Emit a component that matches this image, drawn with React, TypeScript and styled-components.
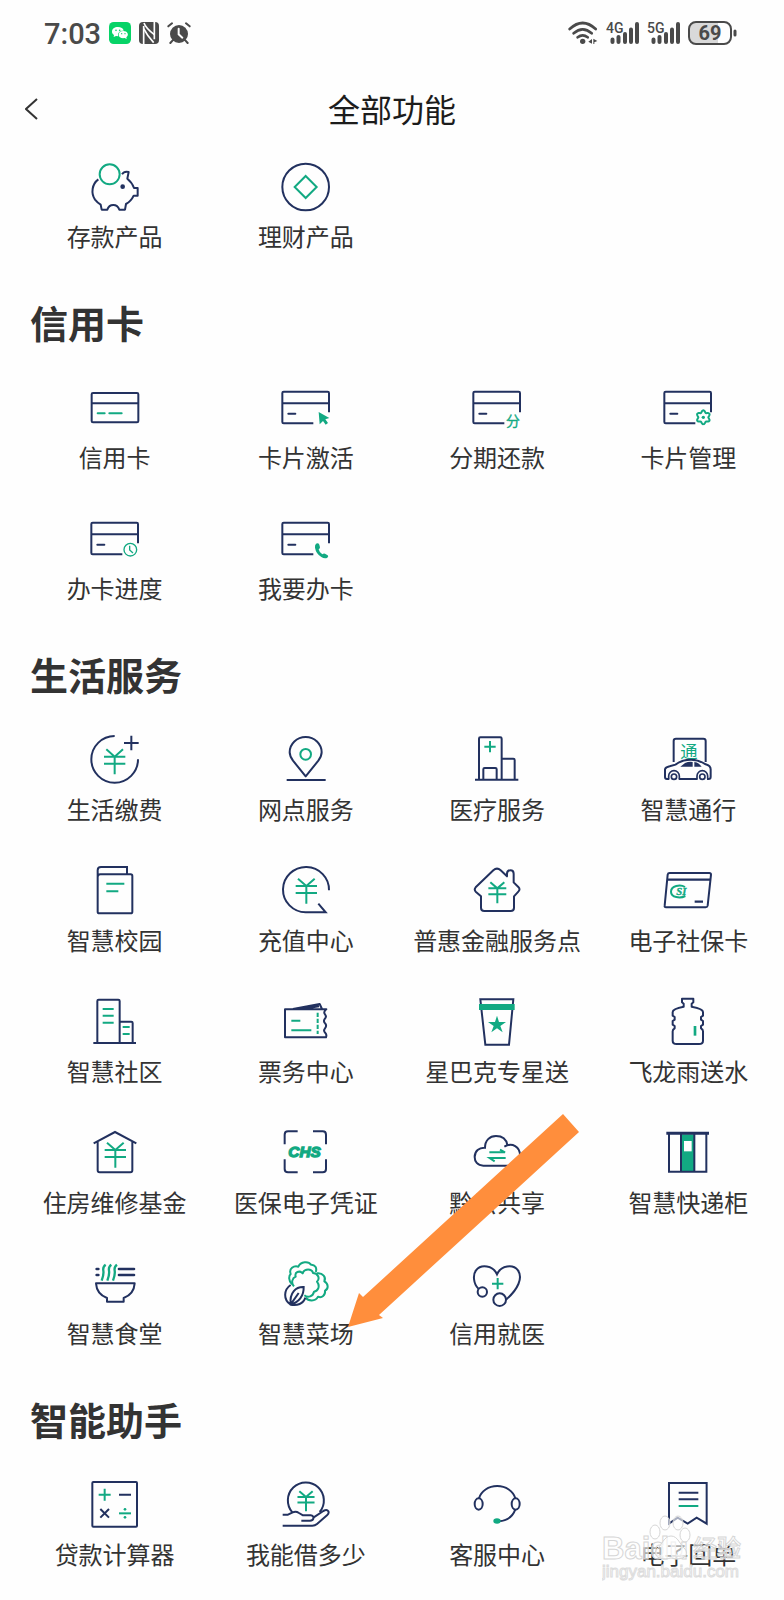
import React from 'react';
import styled, { createGlobalStyle } from 'styled-components';

const NAVY = '#22315f';
const GREEN = '#12a982';
const STATUS = '#4a4a4a';
const CJK = '"Noto Sans CJK SC", sans-serif';

const GlobalStyle = createGlobalStyle`
  *, *::before, *::after { box-sizing: border-box; }
  body {
    margin: 0;
    background: #fefefe;
    color: #333;
    font-family: ${CJK};
  }
`;

const Page = styled.div`
  position: relative;
  padding-bottom: 28px;
  overflow: hidden;
`;

const StatusBar = styled.div`
  display: flex;
  justify-content: space-between;
  align-items: center;
  height: 66px;
  padding: 0 47px 0 44px;
`;

const StatusGroup = styled.div`
  display: flex;
  align-items: center;
  gap: 8px;
`;

const Clock = styled.time`
  padding-top: 2px;
  font: 500 29px/32px Roboto, sans-serif;
  color: ${STATUS};
`;

const Header = styled.header`
  display: grid;
  grid-template-columns: 64px minmax(0, 1fr) 64px;
  align-items: center;
  height: 84px;
  margin-bottom: 9px;
`;

const BackButton = styled.button`
  display: flex;
  justify-content: center;
  padding: 14px 0 12px;
  border: 0;
  background: none;
`;

const Title = styled.h1`
  margin: 0;
  font-size: 32px;
  line-height: 44px;
  font-weight: 400;
  text-align: center;
  color: #1c1c1c;
`;

const SectionTitle = styled.h2`
  margin: 45px 0 34px 30px;
  font-size: 38px;
  line-height: 48px;
  font-weight: 700;
`;

const Grid = styled.ul`
  display: grid;
  grid-template-columns: repeat(4, minmax(0, 1fr));
  row-gap: 37px;
  margin: 0;
  padding: 0 0 0 19px;
  list-style: none;
`;

const Cell = styled.li`
  position: relative;
  display: flex;
  justify-content: center;
`;

const FeatureButton = styled.button`
  display: flex;
  flex-direction: column;
  align-items: center;
  gap: 4px;
  padding: 0;
  border: 0;
  background: none;
  color: #333;
  font: 400 24px/34px ${CJK};
  white-space: nowrap;
  cursor: pointer;
`;

const IconSvg = styled.svg`
  display: block;
  width: 56px;
  height: 56px;
  fill: none;
  stroke: ${NAVY};
  stroke-width: 6;
  overflow: visible;
`;

const Arrow = styled.svg`
  position: absolute;
  left: calc(50% + 42px);
  bottom: 23px;
  z-index: 1;
  pointer-events: none;
`;

const Watermark = styled.svg`
  position: absolute;
  right: 40px;
  bottom: 16px;
  z-index: 2;
  pointer-events: none;
`;

type IconProps = { x: number; y: number; children: React.ReactNode };
const Icon = ({ x, y, children }: IconProps) => (
  <IconSvg viewBox={`${x} ${y} 168 168`} aria-hidden="true">{children}</IconSvg>
);

const Yen = ({ x, y, s = 1 }: { x: number; y: number; s?: number }) => (
  <path
    stroke={GREEN}
    strokeWidth={6 / s}
    transform={`translate(${x} ${y}) scale(${s})`}
    d="M-25-22L0 0L25-22M-32 0H32M-32 21H32M0 0V53"
  />
);

const Plus = ({ x, y, r, color = GREEN }: { x: number; y: number; r: number; color?: string }) => (
  <path stroke={color} d={`M${x - r} ${y}H${x + r}M${x} ${y - r}V${y + r}`} />
);

const CardBase = ({ children }: { children: React.ReactNode }) => (
  <Icon x={0} y={0}>
    <path d="M153 97V39q0-4-4-4H17q-4 0-4 4v87q0 4 4 4H106M13 70H153" />
    <path d="M31 101H52" strokeLinecap="round" />
    {children}
  </Icon>
);

const gearPath = Array.from({ length: 61 }, (_, i) => {
  const a = (i / 60) * Math.PI * 2;
  const r = 18 + 3 * Math.cos(6 * a);
  return `${i ? 'L' : 'M'}${(130 + r * Math.sin(a)).toFixed(1)} ${(112 + r * Math.cos(a)).toFixed(1)}`;
}).join('');

const icons = {
  piggy: (
    <Icon x={262} y={60}>
      <circle cx="330" cy="106" r="30" stroke={GREEN} />
      <path strokeLinejoin="round" d="M296 121C277 135 273 162 286 182Q294 192 303 197L306 212H323C329 194 352 193 359 212H376L379 195C390 189 397 181 402 170H414V147H403C399 135 393 127 383 119L387 99Q374 95 367 106" />
      <circle cx="369" cy="143" r="4" fill={NAVY} />
    </Icon>
  ),
  finance: (
    <Icon x={835} y={60}>
      <circle cx="918" cy="144" r="70" />
      <path stroke={GREEN} d="M918 111L951 144L918 177L885 144Z" />
    </Icon>
  ),
  card: (
    <Icon x={262} y={33}>
      <rect x="276" y="72" width="140" height="88" rx="4" />
      <path d="M276 103H416" />
      <path stroke={GREEN} strokeLinecap="round" d="M294 133H315M329 133H366" />
    </Icon>
  ),
  activate: (
    <CardBase>
      <path fill={GREEN} stroke="none" d="M122 96L154 114L142 118L150 129L143 134L135 123L125 133Z" />
    </CardBase>
  ),
  installment: (
    <CardBase>
      <text x="111" y="138" fill={GREEN} stroke={GREEN} strokeWidth="1" fontSize="42" fontFamily="Noto Sans CJK SC">分</text>
    </CardBase>
  ),
  manage: (
    <CardBase>
      <path stroke={GREEN} d={gearPath} />
      <circle cx="130" cy="112" r="5" fill={GREEN} stroke="none" />
    </CardBase>
  ),
  progress: (
    <CardBase>
      <circle cx="130" cy="116" r="19" stroke={GREEN} strokeWidth="4" />
      <path stroke={GREEN} strokeWidth="4" d="M128 104V117L138 126" />
    </CardBase>
  ),
  apply: (
    <CardBase>
      <path fill={GREEN} stroke="none" d="M114 98q7-4 10 3l2 8q0 4-4 6q2 10 11 15q4-4 8-2l8 5q4 3-1 7q-8 4-18-2q-16-10-19-28q-1-8 3-12Z" />
    </CardBase>
  ),
  payment: (
    <Icon x={262} y={278}>
      <path d="M345 290A70 70 0 1 0 415 360" />
      <Plus x={395} y={311} r={22} color={NAVY} />
      <Yen x={345} y={352} />
    </Icon>
  ),
  branch: (
    <Icon x={835} y={278}>
      <path strokeLinejoin="round" d="M918 411L880 364C872 353 870 346 870 339A48 46 0 0 1 966 339C966 346 964 353 956 364Z" />
      <circle cx="918" cy="345" r="16" stroke={GREEN} />
      <path d="M861 422H978" />
    </Icon>
  ),
  hospital: (
    <Icon x={232} y={38}>
      <path d="M250 181H380M262 181V58q0-4 4-4H326q4 0 4 4V181M330 118H365q4 0 4 4V181M275 181V150q0-4 4-4H311q4 0 4 4V181" />
      <Plus x={295} y={82} r={17} />
    </Icon>
  ),
  traffic: (
    <Icon x={805} y={38}>
      <path d="M846 128V65q0-7 7-7H935q7 0 7 7V128" />
      <text x="866" y="116" fill={GREEN} stroke="none" fontSize="52" fontFamily="Noto Sans CJK SC">通</text>
      <path fill="#fefefe" d="M826 179Q820 179 820 173V150Q821 144 834 141L851 136C866 124 880 121 898 121C917 121 928 126 942 135Q957 139 957 150V172Q957 179 951 179Z" />
      <path fill={NAVY} stroke="none" d="M866 142L880 131Q892 126 903 128V142ZM908 128Q920 129 930 142H908Z" />
      <path fill="#fefefe" stroke="none" d="M833 183V170A14 14 0 0 1 861 170V183ZM918 183V170A14 14 0 0 1 946 170V183Z" />
      <path d="M831 178V170A16 16 0 0 1 863 170V178M916 178V170A16 16 0 0 1 948 170V178" strokeWidth="5" />
      <circle cx="847" cy="172" r="8" strokeWidth="5" />
      <circle cx="932" cy="172" r="8" strokeWidth="5" />
    </Icon>
  ),
  school: (
    <Icon x={262} y={670}>
      <path d="M294 706V692q0-10 10-10H382V704M294 712q0-8 8-8H393q5 0 5 5V816q0 5-5 5H299q-5 0-5-5V700" />
      <path stroke={GREEN} d="M320 732H374M320 755H356" />
    </Icon>
  ),
  recharge: (
    <Icon x={835} y={670}>
      <path d="M988 752A69 68 0 1 0 918 818H978L956 792" />
      <Yen x={920} y={739} />
    </Icon>
  ),
  inclusive: (
    <Icon x={232} y={430}>
      <path strokeLinejoin="round" d="M252 503L305 452Q316 442 327 452L346 470V462Q346 452 356 452Q366 452 366 462V488L380 502Q387 509 380 516L367 530V564Q367 574 357 574H278Q268 574 268 564V530L253 517Q246 510 252 503Z" />
      <Yen x={317} y={506} s={0.84} />
    </Icon>
  ),
  socialCard: (
    <Icon x={805} y={430}>
      <path d="M834 460H953q5 0 5 5L948 558q-1 5-6 5H823q-5 0-4-5L828 465q1-5 6-5Z" />
      <path strokeWidth="7" d="M827 480H956M909 546H934" />
      <path stroke={GREEN} d="M880 502C866 493 838 498 838 516C838 534 866 537 881 529" />
      <text x="854" y="527" fill={GREEN} stroke={GREEN} strokeWidth="1" fontSize="32" fontWeight="700" fontStyle="italic" fontFamily="Liberation Serif">SI</text>
    </Icon>
  ),
  community: (
    <Icon x={262} y={42}>
      <path d="M281 189H409M293 187V63q0-4 4-4H356q4 0 4 4V187M360 125H395q4 0 4 4V187" />
      <path stroke={GREEN} d="M309 87H342M309 107H342M309 128H342M369 141H390M369 162H390" />
    </Icon>
  ),
  ticket: (
    <Icon x={835} y={42}>
      <path strokeLinejoin="round" d="M856 88H980Q970 96 976 103Q982 110 975 117Q970 124 977 131Q982 138 976 145Q970 152 977 159Q982 164 979 172H856ZM880 87L960 72L967 87M905 87L958 79" />
      <path stroke={GREEN} d="M875 122H902M875 151H935" />
      <path stroke={GREEN} strokeDasharray="13 5" d="M954 98V162" />
    </Icon>
  ),
  coffee: (
    <Icon x={232} y={42}>
      <path d="M266 58H365L352 194H281Z" />
      <path fill={GREEN} stroke="none" d="M262 72H369V90H262ZM316 107L322 126H343L326 138L333 157L316 145L299 157L306 138L289 126H310Z" />
    </Icon>
  ),
  water: (
    <Icon x={805} y={42}>
      <path strokeLinejoin="round" d="M871 56H905V67L900 71V80Q934 86 934 96V107L928 111V119L934 123V134L928 138V145Q934 148 934 154V182Q934 192 922 192H855Q843 192 843 182V154Q843 148 849 145V138L843 134V123L849 119V111L843 107V96Q843 86 876 80V71L871 67Z" />
      <path stroke={GREEN} strokeWidth="8" d="M910 138V167" />
    </Icon>
  ),
  houseFund: (
    <Icon x={262} y={434}>
      <path d="M282 489L346 455L410 489M294 484V570q0 6 6 6H392q6 0 6-6V484" />
      <Yen x={347} y={509} />
    </Icon>
  ),
  medical: (
    <Icon x={835} y={434}>
      <path d="M855 492V463q0-10 10-10H894M940 453H969q10 0 10 10V492M855 537V566q0 10 10 10H894M940 576H969q10 0 10-10V537" />
      <text x="866" y="529" fill={GREEN} stroke={GREEN} strokeWidth="4" fontSize="46" fontWeight="700" fontStyle="italic" fontFamily="Liberation Sans">CHS</text>
    </Icon>
  ),
  cloud: (
    <Icon x={232} y={434}>
      <path d="M358 556H275C257 556 249 543 249 530C249 512 262 501 280 502C280 480 294 467 313 467C331 467 344 477 347 494M338 499C362 485 385 500 385 525C385 545 375 556 358 556" />
      <path stroke={GREEN} d="M293 516H340L325 508M342 533H294L309 543" />
    </Icon>
  ),
  locker: (
    <Icon x={805} y={434}>
      <path fill={GREEN} stroke="none" d="M869 462H908V574H869Z" />
      <path fill="#fefefe" stroke="none" d="M877 482H900V513H877Z" />
      <path d="M832 460V574H944V460M868 460V574M908 460V574" />
      <path strokeWidth="9" d="M824 459H952" />
    </Icon>
  ),
  canteen: (
    <Icon x={262} y={46}>
      <path strokeWidth="8" strokeLinecap="round" d="M358 85H403M358 103H403M291 85H296M291 103H296" />
      <path stroke={GREEN} strokeWidth="7" d="M318 72Q309 78 311 90T306 120M335 72Q326 78 328 90T323 120M352 72Q343 78 345 90T340 120" />
      <path strokeLinejoin="round" d="M289 128H405Q403 160 372 172V183H322V172Q291 160 289 128Z" />
    </Icon>
  ),
  market: (
    <Icon x={835} y={46}>
      <g stroke={GREEN} strokeLinejoin="round">
        <path d="M877 131C866 121 867 105 873 100C867 84 882 74 896 78C903 62 927 61 934 72C946 71 953 83 948 94" />
        <path d="M883 137C873 126 878 112 888 108C884 94 899 88 909 98C914 82 937 83 940 97C955 98 962 113 952 123C963 138 954 151 943 153C940 167 925 173 914 164" />
        <path d="M952 98C970 96 980 110 974 122C987 129 987 145 976 150C978 164 966 173 955 168C947 184 926 182 918 171" />
      </g>
      <path d="M912 139C889 138 869 155 873 191C897 185 913 166 912 139ZM873 133C852 147 850 178 873 192C892 196 911 190 917 171M873 191L897 157" />
    </Icon>
  ),
  credit: (
    <Icon x={418} y={466}>
      <path d="M446 564C431 549 429 522 439 509C454 490 490 494 502 521C514 494 550 490 565 509C580 531 566 565 529 597" />
      <circle cx="458" cy="574" r="14" />
      <circle cx="510" cy="597" r="19" />
      <Plus x={504} y={549} r={17} />
    </Icon>
  ),
  calculator: (
    <Icon x={0} y={6}>
      <rect x="16" y="21" width="134" height="134" rx="3" />
      <Plus x={53} y={59} r={18} />
      <path d="M96 59H132M40 102L66 128M66 102L40 128" />
      <path stroke={GREEN} d="M96 115H132" />
      <circle cx="114" cy="103" r="4" fill={GREEN} stroke="none" />
      <circle cx="114" cy="127" r="4" fill={GREEN} stroke="none" />
    </Icon>
  ),
  loan: (
    <Icon x={0} y={6}>
      <path d="M43 112A54 54 0 1 1 125 111" />
      <Yen x={84} y={66} s={0.8} />
      <path strokeLinejoin="round" d="M14 119H30L44 112Q54 108 63 114L75 121H98Q108 122 106 131Q104 137 96 137H70M106 128L136 108Q147 102 151 109Q154 114 147 121L117 147Q111 152 103 152H14" />
    </Icon>
  ),
  support: (
    <Icon x={232} y={50}>
      <path d="M262 114A56 48 0 0 1 371 114M371 147C363 169 346 181 322 183" />
      <ellipse cx="261" cy="131" rx="12" ry="17" />
      <ellipse cx="372" cy="131" rx="12" ry="17" />
      <ellipse cx="316" cy="182" rx="11" ry="8" fill={GREEN} stroke="none" />
    </Icon>
  ),
  receipt: (
    <Icon x={805} y={50}>
      <path d="M832 68H945V190L915 172L888 190L858 172L832 190Z" />
      <path d="M861 97H920M861 117H920" />
      <path stroke={GREEN} d="M861 137H920" />
    </Icon>
  ),
};

type Feature = { label: string; icon: keyof typeof icons; marked?: boolean };
const sections: { title?: string; items: Feature[] }[] = [
  {
    items: [
      { label: '存款产品', icon: 'piggy' },
      { label: '理财产品', icon: 'finance' },
    ],
  },
  {
    title: '信用卡',
    items: [
      { label: '信用卡', icon: 'card' },
      { label: '卡片激活', icon: 'activate' },
      { label: '分期还款', icon: 'installment' },
      { label: '卡片管理', icon: 'manage' },
      { label: '办卡进度', icon: 'progress' },
      { label: '我要办卡', icon: 'apply' },
    ],
  },
  {
    title: '生活服务',
    items: [
      { label: '生活缴费', icon: 'payment' },
      { label: '网点服务', icon: 'branch' },
      { label: '医疗服务', icon: 'hospital' },
      { label: '智慧通行', icon: 'traffic' },
      { label: '智慧校园', icon: 'school' },
      { label: '充值中心', icon: 'recharge' },
      { label: '普惠金融服务点', icon: 'inclusive' },
      { label: '电子社保卡', icon: 'socialCard' },
      { label: '智慧社区', icon: 'community' },
      { label: '票务中心', icon: 'ticket' },
      { label: '星巴克专星送', icon: 'coffee' },
      { label: '飞龙雨送水', icon: 'water' },
      { label: '住房维修基金', icon: 'houseFund' },
      { label: '医保电子凭证', icon: 'medical' },
      { label: '黔云共享', icon: 'cloud' },
      { label: '智慧快递柜', icon: 'locker' },
      { label: '智慧食堂', icon: 'canteen' },
      { label: '智慧菜场', icon: 'market', marked: true },
      { label: '信用就医', icon: 'credit' },
    ],
  },
  {
    title: '智能助手',
    items: [
      { label: '贷款计算器', icon: 'calculator' },
      { label: '我能借多少', icon: 'loan' },
      { label: '客服中心', icon: 'support' },
      { label: '电子回单', icon: 'receipt' },
    ],
  },
];

const Signal = ({ label }: { label: string }) => (
  <svg width="33" height="24" viewBox="0 0 33 24" aria-hidden="true">
    <text x="0" y="12" fontSize="14" fontWeight="500" fontFamily="Roboto" fill={STATUS}>{label}</text>
    <path stroke={STATUS} strokeWidth="4" strokeLinecap="round" d="M6.5 18.5V21M12.5 16V21M19 13V21M25 8.5V21M31 3V21" />
  </svg>
);

export default function App() {
  return (
    <Page>
      <GlobalStyle />
      <StatusBar>
        <StatusGroup>
          <Clock>7:03</Clock>
          <svg width="22" height="22" viewBox="0 0 66 66" aria-hidden="true">
            <rect width="66" height="66" rx="14" fill="#07d367" />
            <path fill="#fff" d="M27 15c-11 0-18 6-18 14 0 4 2 7 6 10l-1 6 7-3 7 1c-4-12 7-18 16-17-1-7-8-11-17-11Z" />
            <path fill="#fff" d="M43 27c-9 0-14 5-14 11 0 7 8 12 18 10l6 3-1-5c10-8 3-19-9-19Z" />
            <g fill="#07d367"><circle cx="21" cy="25" r="2.5" /><circle cx="32" cy="25" r="2.5" /><circle cx="38" cy="35" r="2" /><circle cx="48" cy="35" r="2" /></g>
          </svg>
          <svg width="20" height="22" viewBox="0 0 60 66" aria-hidden="true">
            <rect width="60" height="66" rx="12" fill={STATUS} />
            <path stroke="#fefefe" strokeWidth="5" fill="none" d="M14 66V12M46 0V52" />
            <path stroke="#fefefe" strokeWidth="5" fill="none" d="M15 3Q20 18 46 38M14 20Q24 40 44 62" />
          </svg>
          <svg width="24" height="22" viewBox="0 0 72 66" aria-hidden="true">
            <circle cx="36" cy="36" r="27" fill={STATUS} />
            <path stroke={STATUS} strokeWidth="6" strokeLinecap="round" fill="none" d="M4 13L15 4M68 13L57 4M17 55L10 63M55 55L62 63" />
            <path stroke="#fefefe" strokeWidth="6" strokeLinecap="round" fill="none" d="M35 20V37L46 47" />
          </svg>
        </StatusGroup>
        <StatusGroup>
          <svg width="30" height="24" viewBox="0 0 90 72" aria-hidden="true">
            <g fill="none" stroke={STATUS} strokeWidth="8" strokeLinecap="round">
              <path d="M5 24Q44-12 83 24M17 37Q44 13 71 37M29 49Q44 37 59 49" />
            </g>
            <circle cx="44" cy="61" r="8" fill={STATUS} />
            <path fill={STATUS} d="M61 62L72 54V68ZM76 53L88 60L79 64V69H76Z" />
          </svg>
          <Signal label="4G" />
          <Signal label="5G" />
          <svg width="49" height="24" viewBox="0 0 49 24" aria-hidden="true">
            <path fill="#d9d9d9" d="M8 1H30V23H8Q1 23 1 16V8Q1 1 8 1Z" />
            <rect x="1" y="1" width="42" height="22" rx="7" fill="none" stroke={STATUS} strokeWidth="2" />
            <path stroke={STATUS} strokeWidth="3" strokeLinecap="round" d="M47 10V14" />
            <text x="22" y="19" textAnchor="middle" fontSize="20" fontWeight="700" fontFamily="Roboto" fill={STATUS}>69</text>
          </svg>
        </StatusGroup>
      </StatusBar>

      <Header>
        <BackButton aria-label="返回">
          <svg width="14" height="24" viewBox="0 0 14 24" fill="none" stroke="#333" strokeWidth="2" aria-hidden="true">
            <path d="M12 2L1 12L12 22" />
          </svg>
        </BackButton>
        <Title>全部功能</Title>
      </Header>

      <main>
        {sections.map((section, index) => (
          <section key={index}>
            {section.title && <SectionTitle>{section.title}</SectionTitle>}
            <Grid>
              {section.items.map((item) => (
                <Cell key={item.label}>
                  <FeatureButton type="button">
                    {icons[item.icon]}
                    {item.label}
                  </FeatureButton>
                  {item.marked && (
                    <Arrow width="232" height="213" viewBox="0 0 232 213" aria-hidden="true">
                      <path fill="#ff8e3c" d="M215 0L231 18L31 201L35 204L0 213L11 179L15 183Z" />
                    </Arrow>
                  )}
                </Cell>
              ))}
            </Grid>
          </section>
        ))}
      </main>

      <Watermark width="142" height="70" viewBox="0 0 142 70" aria-hidden="true">
        <g fill="#fff" fillOpacity="0.6" stroke="#d6d6d6" strokeWidth="1">
          <text x="0" y="46" fontSize="31" fontWeight="700" fontFamily="Liberation Sans">Baidu</text>
          <text x="91" y="44" fontSize="24" fontWeight="500" fontFamily="Noto Sans CJK SC">经验</text>
          <ellipse cx="53" cy="19" rx="5" ry="7" />
          <ellipse cx="63" cy="10" rx="5" ry="7" />
          <ellipse cx="76" cy="10" rx="5" ry="7" />
          <ellipse cx="83" cy="22" rx="5" ry="7" />
          <path d="M69 23C62 23 60 32 55 36C50 43 58 48 69 45C80 48 88 43 83 36C78 32 76 23 69 23Z" />
        </g>
        <text x="0" y="64" fontSize="17" fontFamily="Liberation Sans" fill="#fff" stroke="#dcdcdc" strokeWidth="1">jingyan.baidu.com</text>
      </Watermark>
    </Page>
  );
}
